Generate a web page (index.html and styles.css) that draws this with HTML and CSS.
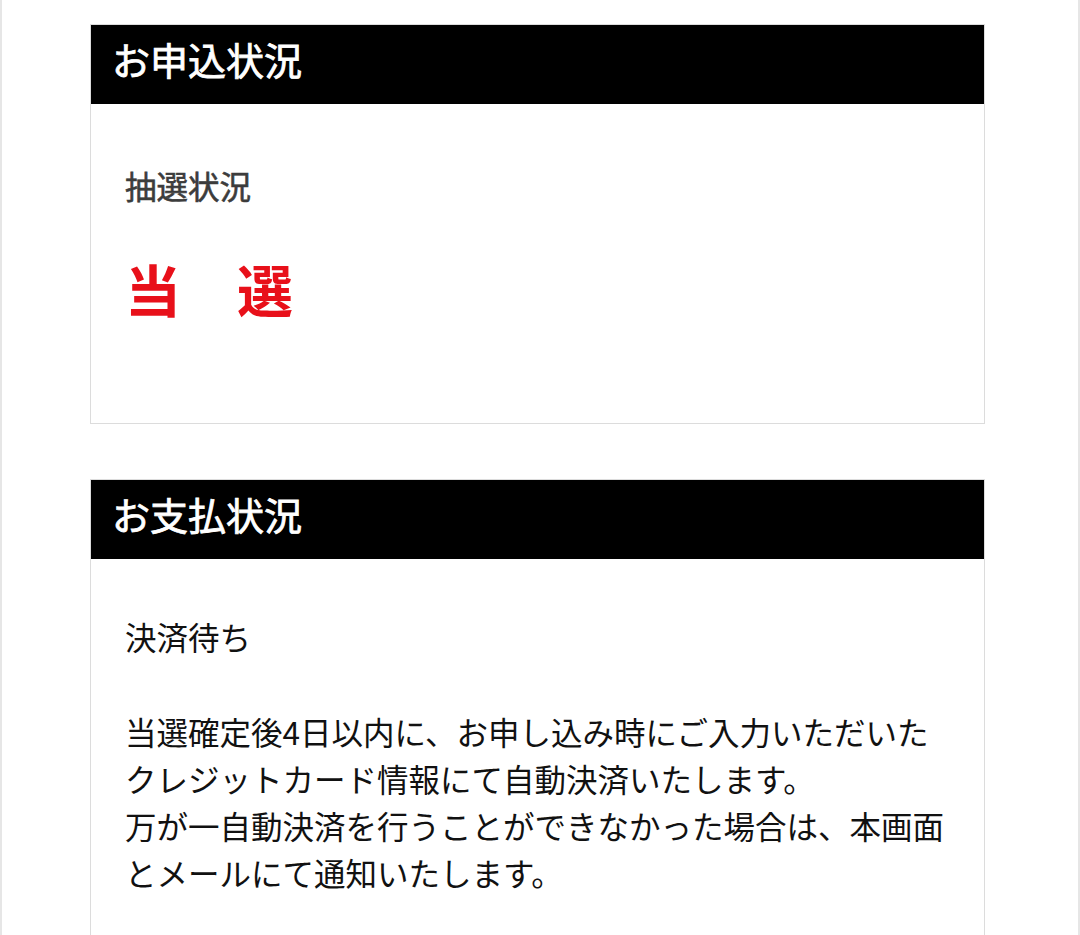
FILE: index.html
```html
<!DOCTYPE html>
<html lang="ja">
<head>
    <meta charset="UTF-8">
    <meta name="viewport" content="width=device-width, initial-scale=1.0">
    <title>お申込状況</title>
    <link rel="stylesheet" href="styles.css">
</head>
<body>
    <div class="page">
        <div class="status-box">
            <h2 class="status-title">お申込状況</h2>
            <div class="status-body">
                <p class="status-label">抽選状況</p>
                <p class="lottery-result">当　選</p>
            </div>
        </div>

        <div class="status-box">
            <h2 class="status-title">お支払状況</h2>
            <div class="status-body status-body--text">
                <p class="status-text">決済待ち</p>
                <p class="status-text">
                    当選確定後4日以内に、お申し込み時にご入力いただいた<br>
                    クレジットカード情報にて自動決済いたします。<br>
                    万が一自動決済を行うことができなかった場合は、本画面<br>
                    とメールにて通知いたします。
                </p>
            </div>
        </div>
    </div>
</body>
</html>
```

FILE: styles.css
```css
html, body {
    margin: 0;
    padding: 0;
    background-color: #ffffff;
}
body {
    font-family: "Noto Sans CJK JP", "Noto Sans", sans-serif;
    color: #111;
}
.page {
    min-height: 100vh;
    box-sizing: border-box;
    border-left: 2px solid #e6e6e6;
    border-right: 2px solid #e6e6e6;
    padding: 24px 93px 0 88px;
}
.status-box {
    margin-bottom: 55px;
    border: 1px solid #dcdcdc;
}
.status-title {
    margin: 0;
    height: 79px;
    box-sizing: border-box;
    display: flex;
    align-items: center;
    padding: 0 21px 12px;
    background-color: #000;
    color: #fff;
    font-size: 38px;
    font-weight: 400;
    /* medium weight look */
    -webkit-text-stroke: 0.8px #fff;
}
.status-body {
    padding: 58px 34px 93px;
}
.status-body--text {
    padding-top: 54px;
}
.status-label {
    margin: 0;
    font-size: 31.5px;
    line-height: 1.5;
    font-weight: 400;
    color: #3c3c3c;
    -webkit-text-stroke: 0.6px #3c3c3c;
}
.lottery-result {
    margin: 37px 0 0;
    font-size: 56px;
    line-height: 1.5;
    font-weight: 700;
    color: #e8101a;
}
.status-text {
    margin: 0 0 47px;
    font-size: 31.5px;
    line-height: 1.5;
}
```
